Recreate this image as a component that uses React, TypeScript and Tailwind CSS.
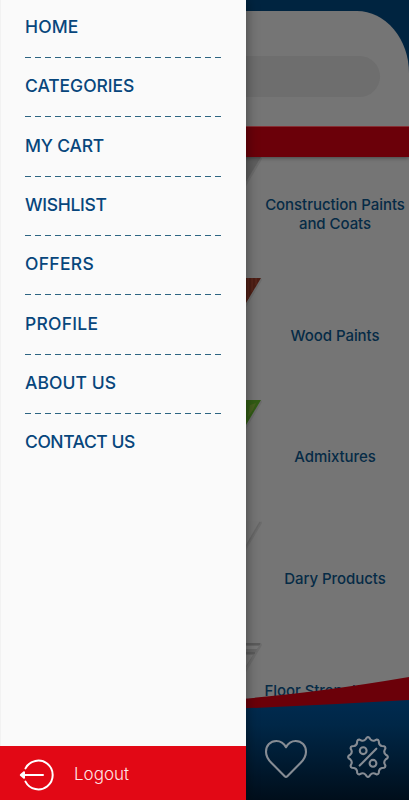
const menuItems = [
  { label: 'HOME', spacing: 'tracking-[0.1px]' },
  { label: 'CATEGORIES', spacing: 'tracking-[-0.05px]' },
  { label: 'MY CART', spacing: 'tracking-[-0.2px]' },
  { label: 'WISHLIST', spacing: 'tracking-[-0.3px]' },
  { label: 'OFFERS', spacing: 'tracking-[0.3px]' },
  { label: 'PROFILE', spacing: 'tracking-[0.25px]' },
  { label: 'ABOUT US', spacing: 'tracking-[0.05px]' },
  { label: 'CONTACT US', spacing: 'tracking-[-0.45px]' },
]

const categories = [
  { lines: ['Construction Paints', 'and Coats'], fill: '#5f5f5f', kind: 'plain' },
  { lines: ['Wood Paints'], fill: '#4b1d14', kind: 'wood' },
  { lines: ['Admixtures'], fill: '#315c14', kind: 'grass' },
  { lines: ['Dary Products'], fill: '#747474', kind: 'line' },
  { lines: ['Floor Strengthening'], fill: '#666666', kind: 'floor' },
]

// visible corner of each category picture
const Corner = ({ kind, fill }: { kind: string; fill: string }) => (
  <svg className="mt-[4px] h-[44px] w-[20px] shrink-0 overflow-visible" viewBox="0 0 20 44">
    <path d="M16 2L0 29V25L15 0Z" fill="#656565" opacity=".6" />
    <path d="M0 0H15L0 25Z" fill={fill} />
    {kind === 'wood' && (
      <path d="M2 0V21M6 0V14M10 0V7" stroke="#5c291d" strokeWidth="1.2" />
    )}
    {kind === 'grass' && <path d="M4 5L10 3L7 10L2 17Z" fill="#46601f" />}
    {kind === 'line' && <path d="M14 1L0 25" stroke="#666" strokeWidth="1.4" />}
    {kind === 'floor' && (
      <>
        <path d="M0 3H13L11 6H0Z" fill="#777" />
        <path d="M0 1H14M0 10H9" stroke="#505050" strokeWidth="1" />
        <path d="M0 12H7L0 23Z" fill="#747474" />
      </>
    )}
  </svg>
)

const LogoutIcon = () => (
  <svg className="h-8 w-9" viewBox="0 0 36 32" fill="none" stroke="white" strokeWidth="2" strokeLinecap="round">
    <path d="M6.5 9.4A14.4 14.4 0 1 1 6.5 22.6" />
    <path d="M3 16H24" />
    <path d="M5 13.2L1.8 16L5 18.8Z" fill="white" strokeLinejoin="round" />
  </svg>
)

const HeartIcon = () => (
  <svg className="mt-[4px] h-[40px] w-[44px]" viewBox="0 0 44 40" fill="none" stroke="#868c94" strokeWidth="2.1" strokeLinejoin="round">
    <path d="M22 8.2C19.8 4.1 16.4 2 12.3 2C6.3 2 2 6.6 2 12.7C2 17.5 4.1 20.7 7.8 24.3L20.7 37.2Q22 38.5 23.3 37.2L36.2 24.3C39.9 20.7 42 17.5 42 12.7C42 6.6 37.7 2 31.7 2C27.6 2 24.2 4.1 22 8.2Z" />
  </svg>
)

// badge outline with twelve scallops
const badge = Array.from({ length: 12 }, (_, i) => {
  const at = (deg: number, r: number) => {
    const a = ((deg - 90) * Math.PI) / 180
    return `${(21 + r * Math.cos(a)).toFixed(2)} ${(21 + r * Math.sin(a)).toFixed(2)}`
  }
  const d = i * 30
  return `${i === 0 ? 'M' : 'L'}${at(d - 4, 19.3)}Q${at(d, 20.4)} ${at(d + 4, 19.3)}L${at(d + 8, 17.8)}Q${at(d + 15, 16.2)} ${at(d + 22, 17.8)}`
}).join('')

const OffersIcon = () => (
  <svg className="h-[42px] w-[42px]" viewBox="0 0 42 42" fill="none" stroke="#868c94" strokeWidth="2.1" strokeLinejoin="round" strokeLinecap="round">
    <path d={`${badge}Z`} />
    <circle cx="16.2" cy="14.7" r="3.4" />
    <circle cx="26" cy="27.3" r="3.4" />
    <path d="M29.3 12.7L12.7 29.6" />
  </svg>
)

const StorePage = () => (
  <div className="isolate flex h-full flex-col bg-[#757575]">
    <header className="z-10 shrink-0 bg-[#002440] pt-[11px] shadow-[0_1px_4px_rgba(0,0,0,0.4)]">
      <div className="h-[115px] rounded-tr-[52px_62px] bg-[#757575] pt-[45px]">
        <div className="mr-[29px] h-[41px] rounded-r-full bg-[#6e6e6e]" />
      </div>
      <div className="h-[31px] border-t border-[#862f34] bg-[#6b0009]" />
    </header>

    <main className="-mt-[4px] h-[560px] shrink-0 overflow-hidden">
      {categories.map((c) => (
        <div key={c.lines[0]} className="flex h-[121.4px] pl-[246px]">
          <Corner kind={c.kind} fill={c.fill} />
          <div
            className={`-ml-[5px] flex flex-1 flex-col items-center text-[15px] leading-[18.5px] font-medium tracking-[-0.05px] text-[#062b46] ${
              c.kind === 'floor' ? 'pt-[43px]' : 'justify-center pt-[2px]'
            }`}
          >
            {c.lines.map((line) => (
              <span key={line} className="whitespace-nowrap">{line}</span>
            ))}
          </div>
        </div>
      ))}
    </main>

    <nav className="relative z-10 -mt-[40px] h-[127px] shrink-0">
      <svg className="absolute inset-0 h-[127px] w-[409px]" viewBox="0 0 409 127">
        <defs>
          <linearGradient id="navFill" x1="0" y1="0" x2="0" y2="1">
            <stop offset="0" stopColor="#002b50" />
            <stop offset="0.25" stopColor="#002747" />
            <stop offset="1" stopColor="#000e1b" />
          </linearGradient>
        </defs>
        <path d="M240 26Q315 20 409 4V127H240Z" fill="#6b0009" />
        <path d="M240 35.5Q325 32 409 27V127H240Z" fill="url(#navFill)" />
      </svg>
      <div className="relative flex items-center gap-[39px] pt-[62px] pl-[264px]">
        <HeartIcon />
        <OffersIcon />
      </div>
    </nav>
  </div>
)

const Drawer = () => (
  <aside className="absolute inset-y-0 left-0 z-20 flex w-[246px] flex-col bg-[#fafafa] shadow-[0_0_12px_rgba(0,0,0,0.45)]">
    <ul className="flex-1 border-l border-[#f2f2f2] px-[24px]">
      {menuItems.map((item, i) => (
        <li key={item.label} className={i === 0 ? 'h-[57px]' : 'h-[59.35px]'}>
          {i > 0 && (
            <div className="h-px w-[196px] bg-[repeating-linear-gradient(90deg,#2d6482_0_6.3px,transparent_6.3px_9.98px)]" />
          )}
          <div className={`${i === 0 ? 'pt-[14px]' : 'pt-[15.4px]'} text-[17.5px] leading-[26px] font-medium whitespace-nowrap text-[#07467c] ${item.spacing}`}>
            {item.label}
          </div>
        </li>
      ))}
    </ul>
    <button className="flex h-[54px] items-center bg-[#e20815] pt-[3px] pl-[19px] text-left">
      <LogoutIcon />
      <span className="ml-[19px] text-[17px] font-light text-[#ffe4e4]">Logout</span>
    </button>
  </aside>
)

export default function App() {
  return (
    <div className="relative h-[800px] w-[409px] overflow-hidden font-['Inter',sans-serif]">
      <StorePage />
      <Drawer />
    </div>
  )
}
